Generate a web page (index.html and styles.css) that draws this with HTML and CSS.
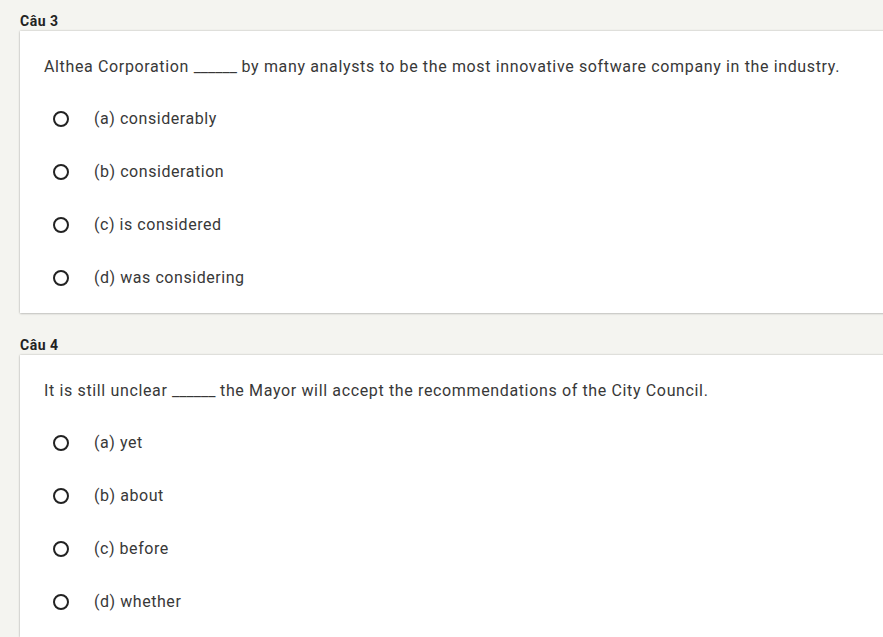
FILE: index.html
```html
<!DOCTYPE html>
<html>
<head>
<meta charset="utf-8">
<link rel="stylesheet" href="styles.css">
</head>
<body>
<div class="quiz">
  <section class="q">
    <div class="q-label">Câu 3</div>
    <div class="card">
      <p class="q-text">Althea Corporation <span class="blank">______</span> by many analysts to be the most innovative software company in the industry.</p>
      <ul class="opts">
        <li class="opt"><span class="radio"></span><span>(a) considerably</span></li>
        <li class="opt"><span class="radio"></span><span>(b) consideration</span></li>
        <li class="opt"><span class="radio"></span><span>(c) is considered</span></li>
        <li class="opt"><span class="radio"></span><span>(d) was considering</span></li>
      </ul>
    </div>
  </section>
  <section class="q">
    <div class="q-label">Câu 4</div>
    <div class="card">
      <p class="q-text">It is still unclear <span class="blank">______</span> the Mayor will accept the recommendations of the City Council.</p>
      <ul class="opts">
        <li class="opt"><span class="radio"></span><span>(a) yet</span></li>
        <li class="opt"><span class="radio"></span><span>(b) about</span></li>
        <li class="opt"><span class="radio"></span><span>(c) before</span></li>
        <li class="opt"><span class="radio"></span><span>(d) whether</span></li>
      </ul>
    </div>
  </section>
</div>
</body>
</html>
```

FILE: styles.css
```css
html, body {
  margin: 0;
  padding: 0;
  background: #f4f4f0;
}
body {
  font-family: Roboto, "Liberation Sans", sans-serif;
  color: #333;
  overflow: hidden;
}
.quiz {
  padding: 11px 0 0 20px;
  display: flex;
  flex-direction: column;
  gap: 22px;
}
.q-label {
  font-size: 14px;
  font-weight: 700;
  line-height: 20px;
  letter-spacing: 0.5px;
  color: #222;
}
.card {
  background: #fff;
  margin-right: -20px;
  padding: 24px 0 9px 24px;
  box-shadow: 0 0 2px rgba(0,0,0,0.25), 0 1px 2px rgba(0,0,0,0.12);
}
.q-text {
  margin: 0 0 13px;
  font-size: 16px;
  line-height: 24px;
  letter-spacing: 0.64px;
  color: #383838;
}
.blank {
  letter-spacing: 0;
}
.opts {
  list-style: none;
  margin: 0;
  padding: 0;
}
.opt {
  height: 53px;
  display: flex;
  align-items: center;
  font-size: 16px;
  letter-spacing: 0.55px;
  color: #383838;
}
.radio {
  width: 12px;
  height: 12px;
  border: 2px solid #222;
  border-radius: 50%;
  margin-left: 9px;
  margin-right: 25px;
  flex: none;
}
```
